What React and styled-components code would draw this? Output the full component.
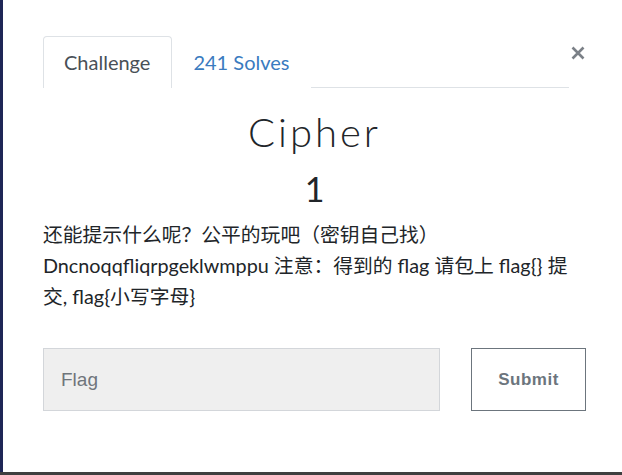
import React from 'react'
import styled, { createGlobalStyle } from 'styled-components'

const Global = createGlobalStyle`
  html, body {
    margin: 0;
    padding: 0;
    background: #3c3c3c;
    font-family: Lato, "Noto Sans CJK SC", sans-serif;
  }
`

function App() {
  return (
    <Page>
      <Global />
      <Stage>
        <Backdrop />
        <Modal>
          <Header>
            <Tabs>
              <Tab active>Challenge</Tab>
              <Tab>241 Solves</Tab>
            </Tabs>
            <Close aria-label="Close">
              <svg width="14" height="14" viewBox="0 0 14 14">
                <path d="M1.5 1.5 L12.5 12.5 M12.5 1.5 L1.5 12.5" stroke="#7b8087" strokeWidth="2.6" />
              </svg>
            </Close>
          </Header>
          <Title>Cipher</Title>
          <Points>1</Points>
          <Description>
            还能提示什么呢？公平的玩吧（密钥自己找）
            <br />
            Dncnoqqfliqrpgeklwmppu 注意：得到的 flag 请包上 flag{'{}'} 提交, flag{'{'}小写字母{'}'}
          </Description>
          <SubmitRow>
            <FlagInput placeholder="Flag" />
            <SubmitButton>Submit</SubmitButton>
          </SubmitRow>
        </Modal>
      </Stage>
      <BottomStrip />
    </Page>
  )
}

export default App

const Page = styled.div`
  width: 622px;
  height: 475px;
  display: flex;
  flex-direction: column;
  overflow: hidden;
`
const Stage = styled.div`
  display: flex;
  height: 472px;
`
const Backdrop = styled.div`
  width: 3px;
  flex-shrink: 0;
  background: #1e2656;
`
const BottomStrip = styled.div`
  height: 3px;
  background: #3f3f3f;
`
const Modal = styled.div`
  flex: 1;
  min-width: 0;
  background: #fff;
  padding: 36px 36px 0 40px;
  box-sizing: border-box;
`
const Header = styled.div`
  display: flex;
  align-items: flex-start;
`
const Tabs = styled.div`
  display: flex;
  flex-shrink: 0;
  width: 526px;
  border-bottom: 1px solid #dee2e6;
`
const Tab = styled.div`
  height: 50px;
  padding: 0 21px 1px 20px;
  display: flex;
  align-items: center;
  font-size: 20px;
  color: ${p => (p.active ? '#495057' : '#3a7bc0')};
  border: 1px solid ${p => (p.active ? '#dee2e6' : 'transparent')};
  border-bottom: none;
  border-radius: 4px 4px 0 0;
  background: #fff;
  margin-bottom: -1px;
`
const Close = styled.div`
  flex-shrink: 0;
  display: flex;
  margin: 10px 0 0 2px;
`
const Title = styled.h1`
  margin: 16px 0 0;
  text-align: center;
  font-size: 40px;
  font-weight: 300;
  letter-spacing: 3px;
  color: #212529;
  line-height: 56px;
`
const Points = styled.div`
  text-align: center;
  font-size: 34px;
  color: #212529;
  line-height: 56px;
  margin-top: 1px;
`
const Description = styled.p`
  margin: 2px 0 0;
  width: 540px;
  font-size: 19.8px;
  line-height: 31px;
  color: #212529;
`
const SubmitRow = styled.div`
  display: flex;
  margin-top: 36px;
  gap: 31px;
`
const FlagInput = styled.input`
  width: 397px;
  height: 63px;
  box-sizing: border-box;
  background: #efefef;
  border: 1px solid #d3d6da;
  padding: 0 17px;
  font-family: "Liberation Sans", sans-serif;
  font-size: 19px;
  outline: none;
  &::placeholder {
    color: #6f757b;
  }
`
const SubmitButton = styled.button`
  width: 115px;
  height: 63px;
  background: #fff;
  border: 1px solid #6c757d;
  font-family: "Liberation Sans", sans-serif;
  font-weight: bold;
  font-size: 17px;
  letter-spacing: 0.5px;
  color: #6c757d;
`
